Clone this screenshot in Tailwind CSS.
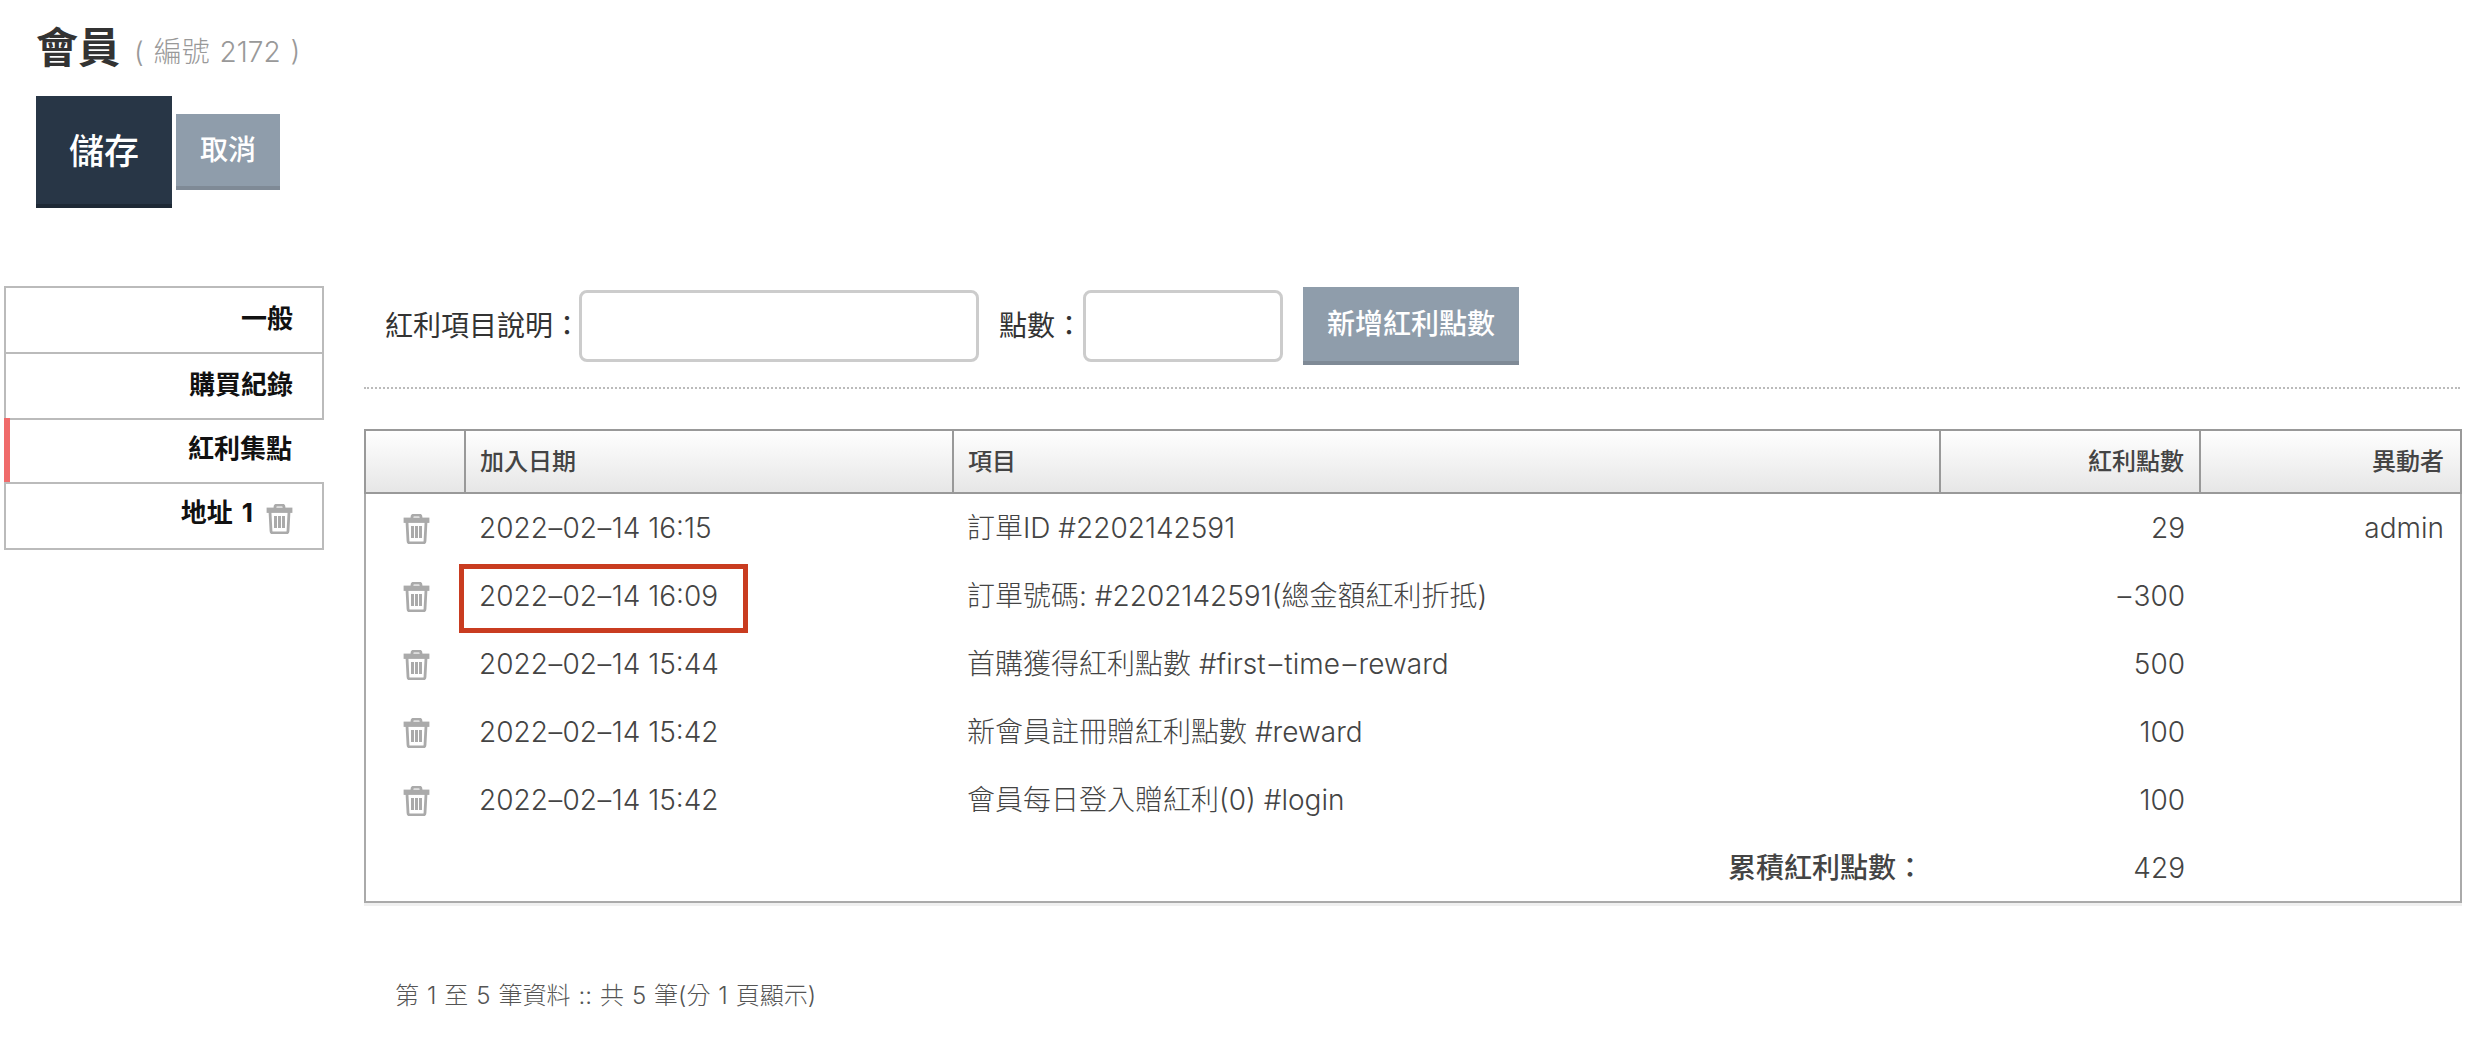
<!DOCTYPE html>
<html lang="zh-Hant">
<head>
    <meta charset="UTF-8">
    <title>會員</title>
    <script src="https://cdn.jsdelivr.net/npm/@tailwindcss/browser@4"></script>
</head>
<body class="w-[2476px] h-[1056px] overflow-hidden bg-white text-[#444] font-['Inter','Noto_Sans_CJK_TC',sans-serif]">

    <!-- page title and actions -->
    <div class="pl-[36px] pt-[18px]">
        <h1 class="flex items-center h-[58px] text-[42px] font-bold text-[#333]">會員<span class="ml-[14px] mt-[10px] text-[28px] font-light text-[#999] [word-spacing:2px]">( 編號 2172 )</span></h1>
        <div class="flex items-end mt-[20px] gap-[4px] h-[112px]">
            <button class="w-[136px] h-[112px] pt-[2px] bg-[#283646] border-b-4 border-[#1e2935] text-[35px] font-medium text-white">儲存</button>
            <button class="w-[104px] h-[76px] mb-[18px] bg-[#8f9dab] border-b-4 border-[#7f8a96] text-[28px] font-medium text-white">取消</button>
        </div>
    </div>

    <div class="flex mt-[78px]">
        <!-- side tabs -->
        <div class="w-[320px] ml-[4px] text-[26px] font-bold text-[#111] text-right">
            <div class="h-[68px] border-2 border-[#bbb] flex items-center justify-end pr-[29px] pb-[4px]">一般</div>
            <div class="h-[68px] -mt-[2px] border-2 border-[#bbb] flex items-center justify-end pr-[29px] pb-[4px]">購買紀錄</div>
            <div class="h-[64px] -mt-[2px] border-l-[6px] border-[#f06b6b] flex items-center justify-end pr-[32px] pb-[4px]">紅利集點</div>
            <div class="h-[68px] border-2 border-[#bbb] flex items-center justify-end pr-[29px] gap-[13px]">
                <span class="pb-[8px] [word-spacing:3px]">地址 1</span>
                <svg class="w-[27px] h-[30px] mt-[6px]" viewBox="0 0 27 30" fill="none" stroke="#aaa" stroke-width="2.8"><path d="M9 4V3a2 2 0 0 1 2-2h5a2 2 0 0 1 2 2v1"/><path d="M2 5h23v2.5H2z"/><path d="M4 8l1 19a2 2 0 0 0 2 2h13a2 2 0 0 0 2-2l1-19"/><path d="M9.5 12v12M13.5 12v12M17.5 12v12" stroke-width="3"/></svg>
            </div>
        </div>

        <!-- bonus points -->
        <div class="w-[2096px] ml-[40px]">
            <div class="flex items-center h-[103px] border-b-2 border-dotted border-[#bbb] pb-[21px] text-[28px] text-[#333]">
                <label class="ml-[21px]">紅利項目說明：</label>
                <input type="text" class="w-[400px] h-[72px] -ml-[2px] border-[3px] border-[#ccc] rounded-lg bg-white">
                <label class="ml-[20px]">點數：</label>
                <input type="text" class="w-[200px] h-[72px] border-[3px] border-[#ccc] rounded-lg bg-white">
                <button class="w-[216px] h-[78px] ml-[20px] bg-[#8f9dab] border-b-4 border-[#7f8a96] text-[28px] font-medium text-white">新增紅利點數</button>
            </div>

            <table class="w-[2096px] mt-[40px] table-fixed border-collapse border-2 border-[#aaa] shadow-[0_3px_0_#f0f0f0] text-[28px]">
                <colgroup>
                    <col class="w-[100px]"><col class="w-[488px]"><col class="w-[987px]"><col class="w-[260px]"><col class="w-[261px]">
                </colgroup>
                <thead>
                    <tr class="h-[63px] bg-linear-to-b from-white to-[#e6e6e6] text-[24px] font-medium text-[#444]">
                        <th class="border-2 border-[#999]"></th>
                        <th class="border-2 border-[#999] px-[14px] text-left font-medium">加入日期</th>
                        <th class="border-2 border-[#999] px-[14px] text-left font-medium">項目</th>
                        <th class="border-2 border-[#999] px-[15px] text-right font-medium">紅利點數</th>
                        <th class="border-2 border-[#999] px-[16px] text-right font-medium">異動者</th>
                    </tr>
                </thead>
                <tbody class="font-light">
                    <tr class="h-[69px]">
                        <td><svg class="w-[27px] h-[30px] ml-[37px] mt-[2px]" viewBox="0 0 27 30" fill="none" stroke="#aaa" stroke-width="2.8"><path d="M9 4V3a2 2 0 0 1 2-2h5a2 2 0 0 1 2 2v1"/><path d="M2 5h23v2.5H2z"/><path d="M4 8l1 19a2 2 0 0 0 2 2h13a2 2 0 0 0 2-2l1-19"/><path d="M9.5 12v12M13.5 12v12M17.5 12v12" stroke-width="3"/></svg></td>
                        <td class="px-[14px]">2022<span class="inline-block px-[1px] scale-x-[1.6]">-</span>02<span class="inline-block px-[1px] scale-x-[1.6]">-</span>14 16:15</td>
                        <td class="px-[14px]">訂單ID #2202142591</td>
                        <td class="px-[15px] text-right">29</td>
                        <td class="px-[16px] text-right">admin</td>
                    </tr>
                    <tr class="h-[68px]">
                        <td><svg class="w-[27px] h-[30px] ml-[37px] mt-[2px]" viewBox="0 0 27 30" fill="none" stroke="#aaa" stroke-width="2.8"><path d="M9 4V3a2 2 0 0 1 2-2h5a2 2 0 0 1 2 2v1"/><path d="M2 5h23v2.5H2z"/><path d="M4 8l1 19a2 2 0 0 0 2 2h13a2 2 0 0 0 2-2l1-19"/><path d="M9.5 12v12M13.5 12v12M17.5 12v12" stroke-width="3"/></svg></td>
                        <td class="relative px-[14px]">2022<span class="inline-block px-[1px] scale-x-[1.6]">-</span>02<span class="inline-block px-[1px] scale-x-[1.6]">-</span>14 16:09
                            <div class="absolute left-[-6px] top-[2px] w-[289px] h-[69px] border-[5px] border-[#c93c20]"></div>
                        </td>
                        <td class="px-[14px]">訂單號碼: #2202142591(總金額紅利折抵)</td>
                        <td class="px-[15px] text-right"><span class="inline-block px-[3px] scale-x-[1.6]">-</span>300</td>
                        <td></td>
                    </tr>
                    <tr class="h-[68px]">
                        <td><svg class="w-[27px] h-[30px] ml-[37px] mt-[2px]" viewBox="0 0 27 30" fill="none" stroke="#aaa" stroke-width="2.8"><path d="M9 4V3a2 2 0 0 1 2-2h5a2 2 0 0 1 2 2v1"/><path d="M2 5h23v2.5H2z"/><path d="M4 8l1 19a2 2 0 0 0 2 2h13a2 2 0 0 0 2-2l1-19"/><path d="M9.5 12v12M13.5 12v12M17.5 12v12" stroke-width="3"/></svg></td>
                        <td class="px-[14px]">2022<span class="inline-block px-[1px] scale-x-[1.6]">-</span>02<span class="inline-block px-[1px] scale-x-[1.6]">-</span>14 15:44</td>
                        <td class="px-[14px]">首購獲得紅利點數 #first<span class="inline-block px-[3px] scale-x-[1.6]">-</span>time<span class="inline-block px-[3px] scale-x-[1.6]">-</span>reward</td>
                        <td class="px-[15px] text-right">500</td>
                        <td></td>
                    </tr>
                    <tr class="h-[68px]">
                        <td><svg class="w-[27px] h-[30px] ml-[37px] mt-[2px]" viewBox="0 0 27 30" fill="none" stroke="#aaa" stroke-width="2.8"><path d="M9 4V3a2 2 0 0 1 2-2h5a2 2 0 0 1 2 2v1"/><path d="M2 5h23v2.5H2z"/><path d="M4 8l1 19a2 2 0 0 0 2 2h13a2 2 0 0 0 2-2l1-19"/><path d="M9.5 12v12M13.5 12v12M17.5 12v12" stroke-width="3"/></svg></td>
                        <td class="px-[14px]">2022<span class="inline-block px-[1px] scale-x-[1.6]">-</span>02<span class="inline-block px-[1px] scale-x-[1.6]">-</span>14 15:42</td>
                        <td class="px-[14px]">新會員註冊贈紅利點數 #reward</td>
                        <td class="px-[15px] text-right">100</td>
                        <td></td>
                    </tr>
                    <tr class="h-[68px]">
                        <td><svg class="w-[27px] h-[30px] ml-[37px] mt-[2px]" viewBox="0 0 27 30" fill="none" stroke="#aaa" stroke-width="2.8"><path d="M9 4V3a2 2 0 0 1 2-2h5a2 2 0 0 1 2 2v1"/><path d="M2 5h23v2.5H2z"/><path d="M4 8l1 19a2 2 0 0 0 2 2h13a2 2 0 0 0 2-2l1-19"/><path d="M9.5 12v12M13.5 12v12M17.5 12v12" stroke-width="3"/></svg></td>
                        <td class="px-[14px]">2022<span class="inline-block px-[1px] scale-x-[1.6]">-</span>02<span class="inline-block px-[1px] scale-x-[1.6]">-</span>14 15:42</td>
                        <td class="px-[14px]">會員每日登入贈紅利(0) #login</td>
                        <td class="px-[15px] text-right">100</td>
                        <td></td>
                    </tr>
                    <tr class="h-[68px]">
                        <td colspan="3" class="px-[16px] text-right text-[28px] font-medium">累積紅利點數：</td>
                        <td class="px-[15px] text-right">429</td>
                        <td></td>
                    </tr>
                </tbody>
            </table>

            <p class="mt-[75px] ml-[31px] text-[24px] font-light text-[#555] [word-spacing:1.2px]">第 1 至 5 筆資料 :: 共 5 筆(分 1 頁顯示)</p>
        </div>
    </div>

</body>
</html>
